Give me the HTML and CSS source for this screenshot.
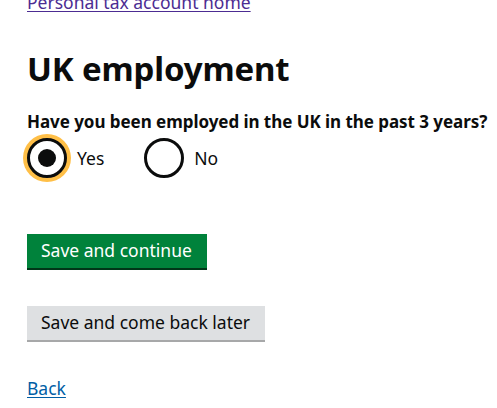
FILE: index.html
```html
<!DOCTYPE html>
<html lang="en">
<head>
<meta charset="utf-8">
<title>UK employment</title>
<link rel="stylesheet" href="styles.css">
</head>
<body>
<main class="page">
  <a class="link link-visited top-link" href="#">Personal tax account home</a>
  <h1 class="heading">UK employment</h1>
  <form class="form">
    <fieldset class="fieldset">
      <legend class="question">Have you been employed in the UK in the past 3 years?</legend>
      <div class="choices">
        <label class="choice">
          <input class="choice-input" type="radio" name="employed" value="yes" checked>
          <span class="radio radio-checked radio-focus"></span>
          <span class="choice-text">Yes</span>
        </label>
        <label class="choice">
          <input class="choice-input" type="radio" name="employed" value="no">
          <span class="radio"></span>
          <span class="choice-text">No</span>
        </label>
      </div>
    </fieldset>
    <div class="actions">
      <button class="button button-primary" type="button">Save and continue</button>
      <button class="button button-secondary" type="button">Save and come back later</button>
    </div>
  </form>
  <a class="link back-link" href="#">Back</a>
</main>
</body>
</html>
```
FILE: styles.css
```css
html, body {
  margin: 0;
  padding: 0;
  background: #ffffff;
}

body {
  font-family: "Noto Sans", "Open Sans", "Liberation Sans", sans-serif;
  color: #0b0c0c;
  overflow: hidden;
}

.page {
  display: flex;
  flex-direction: column;
  align-items: flex-start;
  padding: 0 0 0 27px;
}

.link {
  font-size: 17.5px;
  line-height: 20px;
  color: #005ea5;
  text-decoration: underline;
  text-decoration-thickness: 1px;
  text-underline-offset: 2px;
}

.link-visited {
  color: #4c2c92;
}

.top-link {
  margin-top: -8px;
}

.heading {
  margin: 37px 0 0 0;
  font-size: 33px;
  line-height: 40px;
  font-weight: 700;
  letter-spacing: -0.15px;
}

.form {
  display: flex;
  flex-direction: column;
  align-items: flex-start;
}

.fieldset {
  margin: 23px 0 0 0;
  padding: 0;
  border: 0;
  min-width: 0;
}

.question {
  padding: 0;
  font-size: 17px;
  line-height: 20px;
  font-weight: 700;
  letter-spacing: -0.05px;
  white-space: nowrap;
}

.choices {
  display: flex;
  margin-top: 6px;
}

.choice {
  display: flex;
  align-items: center;
  margin-right: 30px;
}

.choice-input {
  position: absolute;
  opacity: 0;
  width: 0;
  height: 0;
  margin: 0;
}

.radio {
  box-sizing: border-box;
  width: 40px;
  height: 40px;
  border: 3px solid #0b0c0c;
  border-radius: 50%;
  background: #ffffff;
  display: flex;
  align-items: center;
  justify-content: center;
}

.radio-checked::after {
  content: "";
  width: 18px;
  height: 18px;
  border-radius: 50%;
  background: #0b0c0c;
}

.radio-focus {
  box-shadow: 0 0 0 4px #ffbf47;
}

.choice-text {
  font-size: 17.5px;
  line-height: 20px;
  padding: 0 10px 0 10px;
}

.actions {
  display: flex;
  flex-direction: column;
  align-items: flex-start;
  gap: 38px;
  margin-top: 56px;
}

.button {
  font-family: inherit;
  font-size: 17.5px;
  line-height: 23px;
  padding: 5px 15px 6px 14px;
  border: 0;
  border-radius: 0;
  margin: 0;
  cursor: pointer;
}

.button-primary {
  background: #00823b;
  color: #ffffff;
  box-shadow: 0 2px 0 #003618;
}

.button-secondary {
  background: #dee0e2;
  color: #0b0c0c;
  box-shadow: 0 2px 0 #a7a8a9;
}

.back-link {
  margin-top: 38px;
}
```
